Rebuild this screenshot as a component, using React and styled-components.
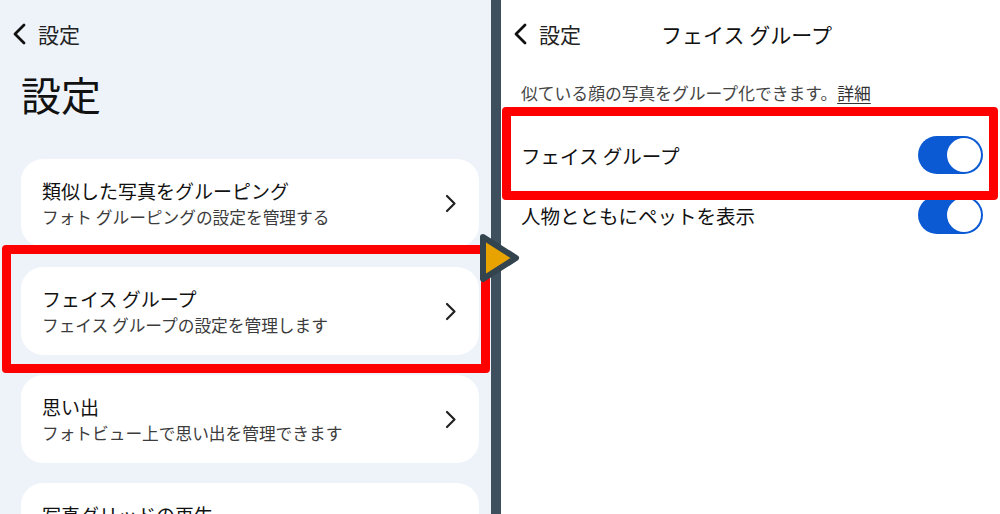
import React from "react";
import styled, { createGlobalStyle } from "styled-components";

const GlobalStyle = createGlobalStyle`
  html, body {
    margin: 0;
    padding: 0;
    background: #ffffff;
  }
  body {
    font-family: "Noto Sans CJK JP", "Noto Sans", sans-serif;
    color: #111;
  }
`;

const cards = [
  { title: "類似した写真をグルーピング", sub: "フォト グルーピングの設定を管理する" },
  { title: "フェイス グループ", sub: "フェイス グループの設定を管理します" },
  { title: "思い出", sub: "フォトビュー上で思い出を管理できます" },
  { title: "写真グリッドの再生", sub: "" },
];

function BackIcon() {
  return (
    <svg width="16" height="22" viewBox="0 0 16 22">
      <path d="M13 2 L4 11 L13 20" fill="none" stroke="#111" strokeWidth="2.8" strokeLinecap="round" strokeLinejoin="round" />
    </svg>
  );
}

function ChevronIcon() {
  return (
    <svg width="12" height="19" viewBox="0 0 12 19">
      <path d="M2 2 L9.5 9.5 L2 17" fill="none" stroke="#222" strokeWidth="2.2" strokeLinecap="round" strokeLinejoin="round" />
    </svg>
  );
}

function App() {
  return (
    <>
      <GlobalStyle />
      <Screen>
        <LeftPanel>
          <TopBar>
            <BackIcon />
            <BackLabel>設定</BackLabel>
          </TopBar>
          <BigTitle>設定</BigTitle>
          <CardList>
            {cards.map((c) => (
              <Card key={c.title}>
                <CardText>
                  <CardTitle>{c.title}</CardTitle>
                  {c.sub && <CardSub>{c.sub}</CardSub>}
                </CardText>
                {c.sub && <ChevronIcon />}
              </Card>
            ))}
          </CardList>
          <Highlight style={{ left: 2, top: 245, width: 488, height: 128 }} />
        </LeftPanel>
        <Divider />
        <RightPanel>
          <RightTopBar>
            <BackGroup>
              <BackIcon />
              <BackLabel>設定</BackLabel>
            </BackGroup>
            <PageTitle>フェイス グループ</PageTitle>
            <span />
          </RightTopBar>
          <Description>
            似ている顔の写真をグループ化できます。<MoreLink>詳細</MoreLink>
          </Description>
          <RowList>
            <SwitchRow>
              <RowLabel>フェイス グループ</RowLabel>
              <Toggle $on>
                <Knob />
              </Toggle>
            </SwitchRow>
            <SwitchRow>
              <RowLabel>人物とともにペットを表示</RowLabel>
              <Toggle $on>
                <Knob />
              </Toggle>
            </SwitchRow>
          </RowList>
          <Highlight style={{ left: 1, top: 107, width: 496, height: 93 }} />
        </RightPanel>
        <Arrow width="60" height="60" viewBox="0 0 60 60">
          <path
            d="M13 9 L46 30 L13 51 Z"
            fill="#e9a300"
            stroke="#34444f"
            strokeWidth="6"
            strokeLinejoin="round"
          />
        </Arrow>
      </Screen>
    </>
  );
}

const Screen = styled.div`
  position: relative;
  display: flex;
  width: 1000px;
  height: 514px;
  overflow: hidden;
`;

const LeftPanel = styled.div`
  position: relative;
  width: 491px;
  flex-shrink: 0;
  background: #eef3fa;
`;

const Divider = styled.div`
  width: 10px;
  flex-shrink: 0;
  background: #3e4f5d;
`;

const RightPanel = styled.div`
  position: relative;
  flex: 1;
  background: #ffffff;
`;

const TopBar = styled.div`
  display: flex;
  align-items: center;
  gap: 11px;
  height: 68px;
  padding-left: 11px;
`;

const BackGroup = styled.div`
  display: flex;
  align-items: center;
  gap: 11px;
`;

const BackLabel = styled.span`
  font-size: 21px;
  color: #222;
`;

const BigTitle = styled.h1`
  margin: 0;
  padding-left: 21px;
  font-size: 40px;
  font-weight: 400;
  line-height: 52px;
  color: #111;
`;

const CardList = styled.div`
  display: flex;
  flex-direction: column;
  gap: 20px;
  margin-top: 39px;
  padding: 0 12px 0 21px;
`;

const Card = styled.div`
  display: flex;
  align-items: center;
  justify-content: space-between;
  height: 88px;
  padding: 0 22px 0 21px;
  background: #ffffff;
  border-radius: 22px;
  box-sizing: border-box;
`;

const CardText = styled.div`
  display: flex;
  flex-direction: column;
  align-self: flex-start;
  padding-top: 18px;
`;

const CardTitle = styled.div`
  font-size: 19px;
  line-height: 27px;
  color: #111;
`;

const CardSub = styled.div`
  font-size: 16.7px;
  line-height: 27px;
  color: #3c3c3c;
`;

const RightTopBar = styled.div`
  display: grid;
  grid-template-columns: 1fr auto 1fr;
  align-items: center;
  height: 68px;
  padding: 0 11px;
`;

const PageTitle = styled.div`
  font-size: 21px;
  color: #111;
  transform: translateX(-4px);
`;

const Description = styled.div`
  margin-top: 13px;
  padding-left: 20px;
  font-size: 16.8px;
  line-height: 24px;
  color: #444;
`;

const MoreLink = styled.span`
  color: #333;
  text-decoration: underline;
  text-underline-offset: 3px;
`;

const RowList = styled.div`
  display: flex;
  flex-direction: column;
  margin-top: 20px;
`;

const SwitchRow = styled.div`
  display: flex;
  align-items: center;
  justify-content: space-between;
  height: 60px;
  padding: 0 17px 0 20px;
`;

const RowLabel = styled.div`
  font-size: 19.5px;
  color: #111;
`;

const Toggle = styled.div`
  display: flex;
  align-items: center;
  justify-content: ${(p) => (p.$on ? "flex-end" : "flex-start")};
  width: 65px;
  height: 38px;
  padding: 2px;
  box-sizing: border-box;
  border-radius: 19px;
  background: ${(p) => (p.$on ? "#0b5ad4" : "#b8bcc4")};
`;

const Knob = styled.div`
  width: 34px;
  height: 34px;
  border-radius: 50%;
  background: #ffffff;
`;

const Highlight = styled.div`
  position: absolute;
  box-sizing: border-box;
  border: 9px solid #ff0000;
  border-radius: 4px;
  pointer-events: none;
`;

const Arrow = styled.svg`
  position: absolute;
  left: 470px;
  top: 228px;
`;

export default App;
